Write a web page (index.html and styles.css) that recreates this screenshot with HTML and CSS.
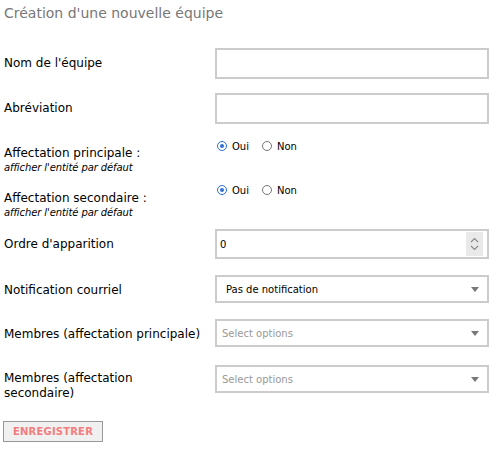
FILE: index.html
```html
<!DOCTYPE html>
<html lang="fr">
<head>
<meta charset="utf-8">
<title>Création d'une nouvelle équipe</title>
<link rel="stylesheet" href="styles.css">
</head>
<body>
<div class="page">
  <h1 class="title">Création d'une nouvelle équipe</h1>
  <form class="form">
    <div class="row">
      <label class="label">Nom de l'équipe</label>
      <div class="field"><div class="input"></div></div>
    </div>
    <div class="row">
      <label class="label">Abréviation</label>
      <div class="field"><div class="input"></div></div>
    </div>
    <div class="row row-radio">
      <div class="label label-stack">
        <span>Affectation principale :</span>
        <em class="hint">afficher l'entité par défaut</em>
      </div>
      <div class="field radios">
        <span class="radio"><span class="dot on"></span>Oui</span>
        <span class="radio"><span class="dot"></span>Non</span>
      </div>
    </div>
    <div class="row row-radio row-tall">
      <div class="label label-stack">
        <span>Affectation secondaire :</span>
        <em class="hint">afficher l'entité par défaut</em>
      </div>
      <div class="field radios">
        <span class="radio"><span class="dot on"></span>Oui</span>
        <span class="radio"><span class="dot"></span>Non</span>
      </div>
    </div>
    <div class="row row-tall">
      <label class="label">Ordre d'apparition</label>
      <div class="field">
        <div class="input number">
          <span class="value">0</span>
          <span class="spin">
            <svg width="9" height="14" viewBox="0 0 9 14"><path d="M1 5 L4.5 1.5 L8 5" fill="none" stroke="#888" stroke-width="1.1"/><path d="M1 9 L4.5 12.5 L8 9" fill="none" stroke="#888" stroke-width="1.1"/></svg>
          </span>
        </div>
      </div>
    </div>
    <div class="row row-short">
      <label class="label">Notification courriel</label>
      <div class="field">
        <div class="select"><span class="sel-text">Pas de notification</span><span class="caret"></span></div>
      </div>
    </div>
    <div class="row row-tall">
      <label class="label">Membres (affectation principale)</label>
      <div class="field">
        <div class="select multi"><span class="placeholder">Select options</span><span class="caret"></span></div>
      </div>
    </div>
    <div class="row">
      <label class="label label-wrap">Membres (affectation secondaire)</label>
      <div class="field">
        <div class="select multi"><span class="placeholder">Select options</span><span class="caret"></span></div>
      </div>
    </div>
    <button type="button" class="btn">ENREGISTRER</button>
  </form>
</div>
</body>
</html>
```
FILE: styles.css
```css
html, body {
  margin: 0;
  padding: 0;
  background: #fff;
}

.page {
  padding: 4px 4px 0 4px;
  font-family: "DejaVu Sans", Verdana, sans-serif;
  color: #000;
}

.title {
  margin: 0;
  font-size: 14px;
  font-weight: normal;
  color: #777;
  line-height: 18px;
  height: 44px;
}

.form {
  display: flex;
  flex-direction: column;
}

.row {
  display: flex;
  height: 45px;
}

.row-tall {
  height: 46px;
}

.row-short {
  height: 44px;
}

.label {
  width: 211px;
  font-size: 12px;
  line-height: 31px;
  flex: none;
}

.label-stack {
  display: flex;
  flex-direction: column;
  line-height: 15px;
  padding-top: 8px;
}

.hint {
  font-size: 10px;
  line-height: 13px;
  letter-spacing: -0.1px;
}

.label-wrap {
  line-height: 15px;
  padding-top: 6px;
  padding-right: 50px;
  box-sizing: border-box;
}

.field {
  width: 274px;
  flex: none;
}

.input {
  box-sizing: border-box;
  height: 31px;
  border: 2px solid #ccc;
  background: #fff;
}

.number {
  height: 30px;
  display: flex;
  align-items: center;
  justify-content: space-between;
  padding: 0 4px 0 3px;
  font-size: 10px;
}

.spin {
  width: 17px;
  height: 24px;
  background: #e9e9e9;
  display: flex;
  align-items: center;
  justify-content: center;
}

.select {
  box-sizing: border-box;
  height: 28px;
  border: 2px solid #ccc;
  display: flex;
  align-items: center;
  justify-content: space-between;
  padding: 1px 8px 0 9px;
  font-size: 10px;
}

.multi {
  padding-left: 5px;
}

.placeholder {
  color: #999;
}

.caret {
  width: 0;
  height: 0;
  border-left: 4px solid transparent;
  border-right: 4px solid transparent;
  border-top: 5px solid #777;
}

.radios {
  display: flex;
  gap: 13px;
  padding-left: 2px;
  padding-top: 1px;
  font-size: 10px;
  height: 14px;
  align-items: center;
}

.row-tall.row-radio .radios {
  padding-top: 0;
}

.radio {
  display: flex;
  align-items: center;
  gap: 5px;
}

.dot {
  box-sizing: border-box;
  width: 10px;
  height: 10px;
  border: 1px solid #767676;
  border-radius: 50%;
  position: relative;
}

.dot.on {
  border-color: #2f6fd8;
}

.dot.on::after {
  content: "";
  position: absolute;
  left: 2px;
  top: 2px;
  width: 4px;
  height: 4px;
  border-radius: 50%;
  background: #2f6fd8;
}

.btn {
  margin-top: 11px;
  margin-left: -1px;
  align-self: flex-start;
  width: 100px;
  height: 21px;
  background: #f0f0f0;
  border: 1px solid #999;
  color: #f47c7c;
  font-family: "DejaVu Sans", Verdana, sans-serif;
  font-weight: bold;
  font-size: 10px;
  letter-spacing: 0.2px;
  padding: 0;
}
```
